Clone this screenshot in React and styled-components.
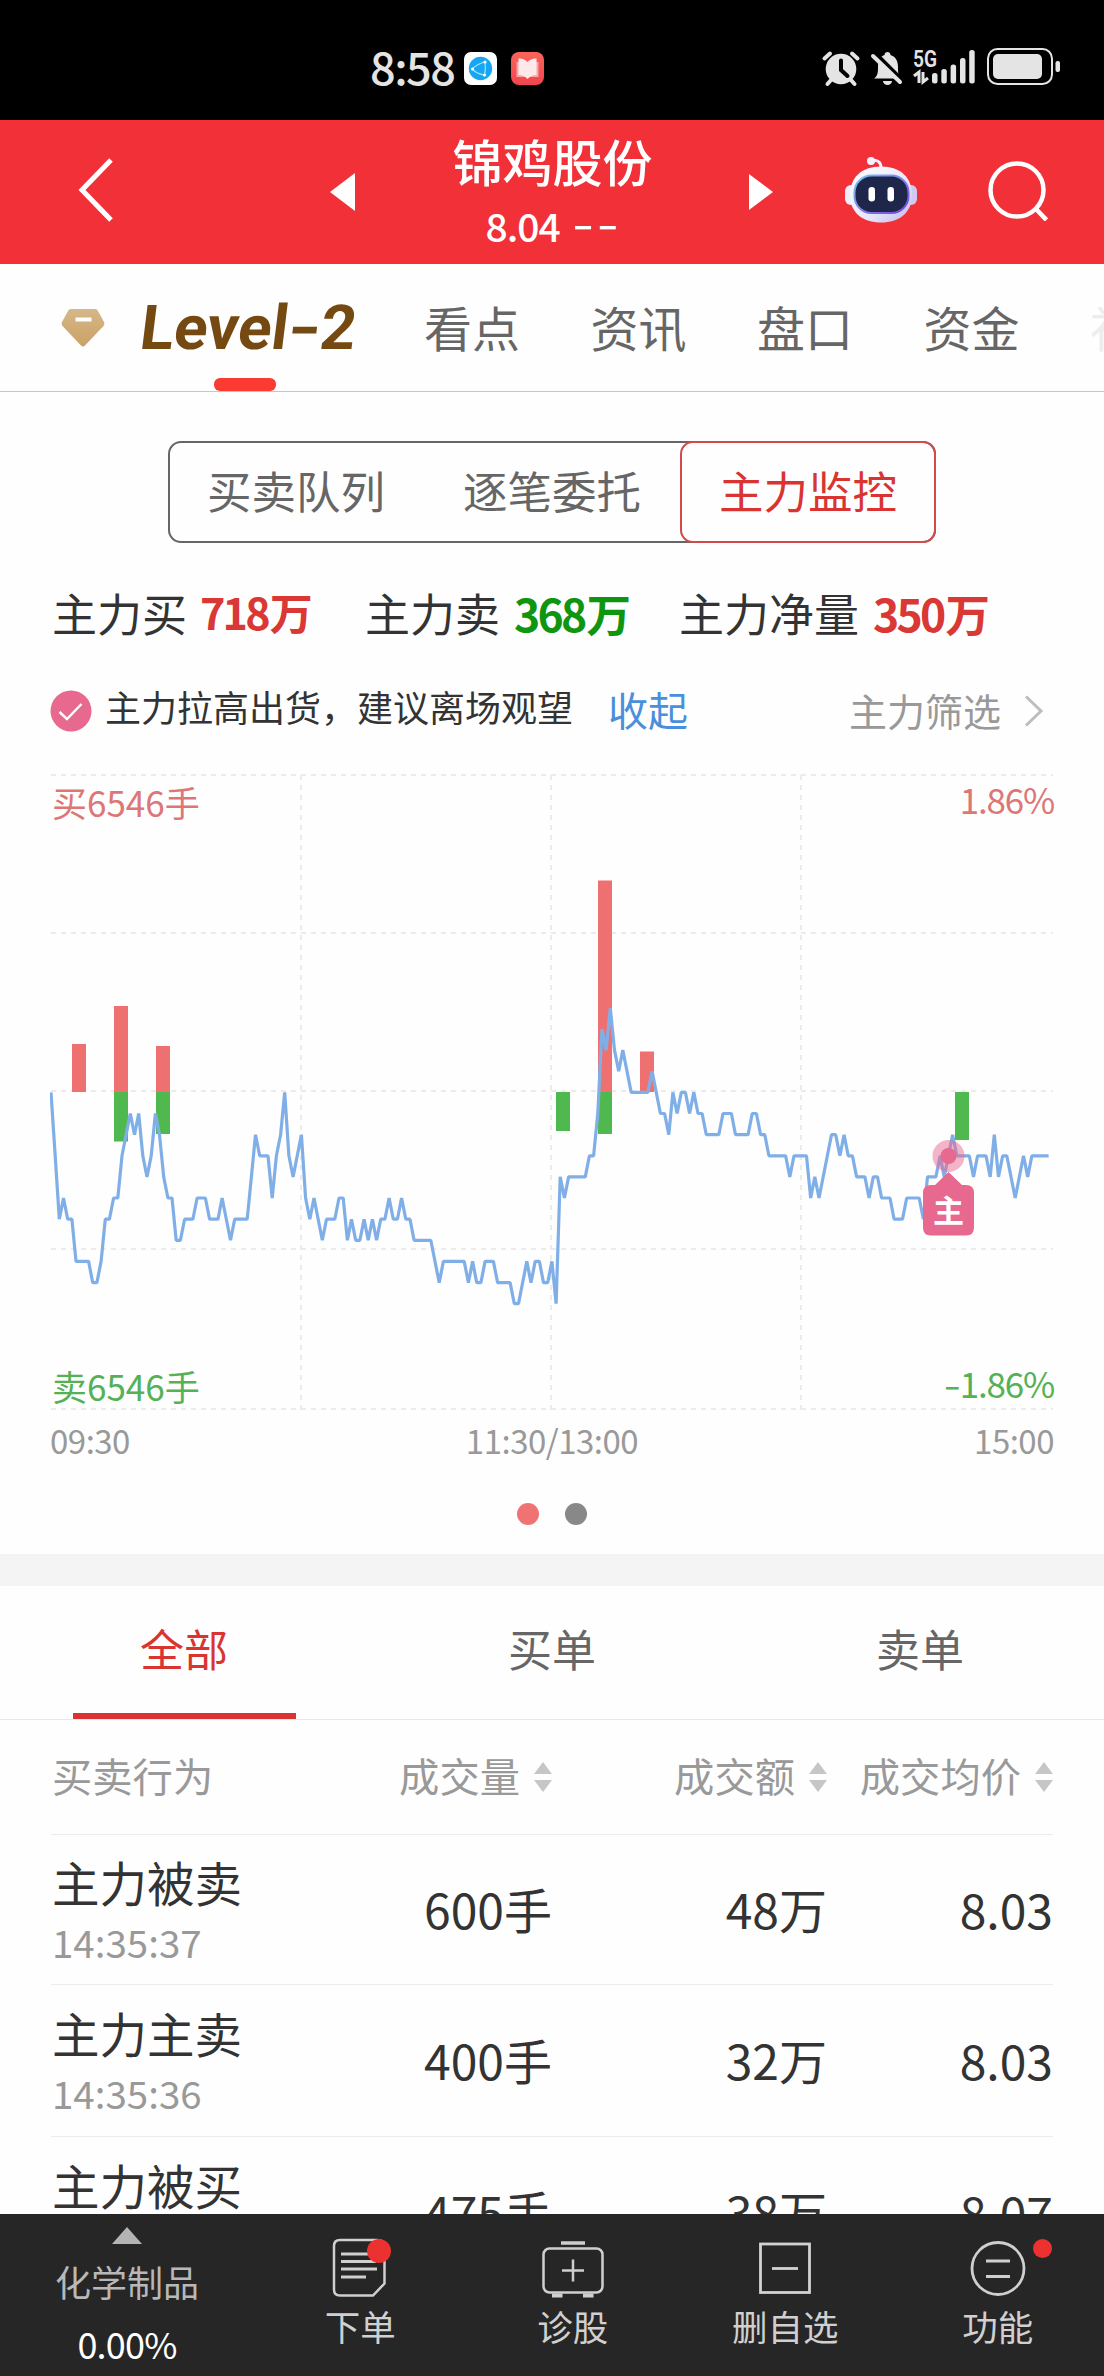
import React, { useState } from "react";
import styled, { createGlobalStyle } from "styled-components";

// minute-by-minute price steps as [minute, ticks below the opening price]
const PRICE = [
  [0, 0], [1, 3], [2, 6], [3, 5], [4, 6], [5, 6], [6, 8], [9, 8], [10, 9], [11, 9], [12, 8], [13, 6], [14, 6],
  [15, 5], [16, 5], [17, 3], [18, 2], [19, 1], [20, 2], [21, 1], [22, 3], [23, 4], [24, 3], [25, 1], [26, 2],
  [27, 4], [28, 5], [29, 5], [30, 7], [31, 7], [32, 6], [34, 6], [35, 5], [37, 5], [38, 6], [40, 6], [41, 5],
  [43, 7], [44, 6], [47, 6], [48, 4], [49, 2], [50, 3], [52, 3], [53, 5], [54, 3], [55, 2], [56, 0], [57, 3],
  [58, 4], [60, 2], [61, 5], [62, 6], [63, 5], [65, 7], [66, 6], [68, 6], [69, 5], [70, 5], [71, 7], [72, 6],
  [73, 7], [74, 7], [75, 6], [76, 7], [77, 6], [78, 7], [79, 6], [80, 6], [81, 5], [82, 6], [83, 6], [84, 5],
  [85, 6], [86, 6], [87, 7], [91, 7], [93, 9], [94, 8], [99, 8], [100, 9], [101, 8], [102, 9], [103, 9],
  [104, 8], [106, 8], [107, 9], [110, 9], [111, 10], [112, 10], [114, 8], [115, 9], [116, 8], [117, 8],
  [118, 9], [119, 9], [120, 8], [121, 10], [122, 4], [123, 5], [124, 4], [128, 4], [129, 3], [130, 3], [131, 1],
  [132, -3], [133, -2], [134, -4], [135, -2], [136, -1], [137, -2], [139, 0], [143, 0], [144, -1], [146, 1],
  [147, 1], [148, 2], [149, 0], [150, 1], [151, 0], [152, 0], [153, 1], [154, 0], [155, 1], [156, 1], [157, 2],
  [160, 2], [161, 1], [163, 1], [164, 2], [167, 2], [168, 1], [169, 1], [170, 2], [171, 2], [172, 3], [176, 3],
  [177, 4], [178, 3], [181, 3], [182, 5], [183, 4], [184, 5], [187, 2], [188, 2], [189, 3], [190, 2], [191, 3],
  [192, 3], [193, 4], [195, 4], [196, 5], [197, 4], [198, 4], [199, 5], [201, 5], [202, 6], [204, 6], [205, 5],
  [208, 5], [209, 6], [210, 4], [212, 4], [213, 3], [214, 4], [215, 3], [216, 2], [217, 3], [220, 3], [221, 4],
  [222, 3], [224, 3], [225, 4], [226, 2], [227, 4], [228, 3], [229, 3], [231, 5], [233, 3], [234, 4], [235, 3],
  [239, 3],
];

// x, buy height, sell height
const BARS = [
  [22, 48, 0],
  [64, 86, 49.5],
  [106, 46, 42],
  [506, 0, 39],
  [548, 211.5, 42],
  [590, 40.5, 0],
  [905, 0, 48],
];

const ZERO = 317;

const NAV_TABS = ["看点", "资讯", "盘口", "资金"];
const MODES = ["买卖队列", "逐笔委托", "主力监控"];
const FILTERS = ["全部", "买单", "卖单"];
const COLUMNS = ["成交量", "成交额", "成交均价"];

const TRADES = [
  { action: "主力被卖", time: "14:35:37", volume: "600手", amount: "48万", price: "8.03" },
  { action: "主力主卖", time: "14:35:36", volume: "400手", amount: "32万", price: "8.03" },
  { action: "主力被买", time: "", volume: "475手", amount: "38万", price: "8.07" },
];

const StatusIcons = () => (
  <svg width="240" height="40" viewBox="0 0 240 40" fill="#e4e4e4">
    <g transform="translate(3 3)">
      <circle cx="18" cy="18" r="15.3" />
      <path d="M1.5 7.5 L7 2.5 M34.5 7.5 L29 2.5 M8 29 L4.5 33 M28 29 L31.5 33" stroke="#e4e4e4" strokeWidth="4" strokeLinecap="round" />
      <path d="M18 9.500 V19 L24.500 25" fill="none" stroke="#000" strokeWidth="4" strokeLinecap="round" />
    </g>
    <g transform="translate(51 2)">
      <path d="M3 28.500 C7 26 7 22 7 16 C7 9.500 10 6 13.500 5 C13.500 1 19.500 1 19.500 5 C24 6.500 27 10 27 17 C27 22 27 26 30 28.500 Z" />
      <path d="M12 31 H21 A4.500 4 0 0 1 12 31 Z" />
      <path d="M4 3 L33 32" stroke="#000" strokeWidth="4" />
      <path d="M2 6 L29 32" stroke="#e4e4e4" strokeWidth="4" strokeLinecap="round" />
    </g>
    <text x="93" y="19" fontFamily="Roboto, sans-serif" fontSize="23" fontWeight="600" textLength="24" lengthAdjust="spacingAndGlyphs">5G</text>
    <path d="M94 28 L99 24 V35 M103 24 V34 L108 30" fill="none" stroke="#e4e4e4" strokeWidth="3" />
    <rect x="112" y="25" width="5.500" height="10.500" rx="2.500" />
    <rect x="121.300" y="21" width="5.500" height="14.500" rx="2.500" />
    <rect x="130.600" y="16.500" width="5.500" height="19" rx="2.500" />
    <rect x="140" y="10" width="5.500" height="25.500" rx="2.500" />
    <rect x="149.200" y="2" width="5.500" height="33.500" rx="2.500" />
    <rect x="168" y="1" width="64" height="35" rx="9.500" fill="none" stroke="#e4e4e4" strokeWidth="2" />
    <rect x="173" y="6" width="49" height="25" rx="5" />
    <rect x="235.500" y="13" width="4.500" height="11" rx="2" />
  </svg>
);

const BrowserIcon = () => (
  <svg width="33" height="33" viewBox="0 0 33 33">
    <rect width="33" height="33" rx="7" fill="#fff" />
    <circle cx="16.500" cy="16.500" r="11.700" fill="#17a6f2" />
    <path d="M8 17 Q14 11.500 21 10 M8 17 Q13 22 20.500 23 M21 10 Q22 17 20.500 23" fill="none" stroke="#a5e0fb" strokeWidth="1.200" />
    <circle cx="8.500" cy="17" r="1.600" fill="#fff" />
    <circle cx="21" cy="10" r="1.600" fill="#fff" />
    <circle cx="20.500" cy="23" r="1.600" fill="#fff" />
  </svg>
);

const BookIcon = () => (
  <svg width="33" height="33" viewBox="0 0 33 33">
    <defs>
      <linearGradient id="book" x1="0" y1="0" x2="0" y2="1">
        <stop offset="0" stopColor="#f9655a" />
        <stop offset="1" stopColor="#f2444f" />
      </linearGradient>
    </defs>
    <rect width="33" height="33" rx="8" fill="url(#book)" />
    <path d="M5.500 10 H27.500 V25 H5.500 Z" fill="#fba5a5" />
    <path d="M7.500 6.500 Q13 6 16.500 10 Q20 6 25.500 6.500 V23 Q20 23 16.500 27 Q13 23 7.500 23 Z" fill="#fde9e9" />
  </svg>
);

const Robot = () => (
  <svg width="74" height="68" viewBox="0 0 74 68">
    <defs>
      <linearGradient id="shell" x1="0" y1="0" x2="1" y2="1">
        <stop offset="0" stopColor="#fff" />
        <stop offset=".6" stopColor="#e9e6fa" />
        <stop offset="1" stopColor="#bcb8ec" />
      </linearGradient>
      <linearGradient id="rim" x1="0" y1="0" x2="1" y2="1">
        <stop offset="0" stopColor="#7cc4f0" />
        <stop offset="1" stopColor="#7a3fe0" />
      </linearGradient>
    </defs>
    <path d="M27 4.500 Q37 3 37 12" fill="none" stroke="#f3eefc" strokeWidth="3" />
    <circle cx="27" cy="5" r="4" fill="#f6f2fd" />
    <rect x="1" y="29" width="12" height="20" rx="6" fill="#efedfb" />
    <rect x="61" y="29" width="12" height="20" rx="6" fill="#cfcaf2" />
    <path d="M37 10.500 C57 10.500 68 22 68 39 C68 57 55 66.500 37 66.500 C19 66.500 6 57 6 39 C6 22 17 10.500 37 10.500 Z" fill="url(#shell)" />
    <rect x="10.500" y="19.500" width="54" height="37.500" rx="17" fill="#1e2749" stroke="url(#rim)" strokeWidth="2" />
    <rect x="24.500" y="31" width="6.500" height="14.500" rx="3.200" fill="#fff" />
    <rect x="43.500" y="31" width="6.500" height="14.500" rx="3.200" fill="#fff" />
  </svg>
);

const Diamond = () => (
  <svg width="44" height="38" viewBox="0 0 44 38">
    <defs>
      <linearGradient id="gold" x1="0" y1="0" x2="0" y2="1">
        <stop offset="0" stopColor="#d6b78a" />
        <stop offset="1" stopColor="#caa264" />
      </linearGradient>
    </defs>
    <path d="M9.500 0 H34 Q36 0 37 2 L43 13 Q44 15 42.500 17 L24 36.500 Q22 38.500 20 36.500 L1.500 17 Q0 15 1 13 L7 2 Q8 0 9.500 0 Z" fill="url(#gold)" />
    <rect x="14.500" y="8.500" width="16" height="4" fill="#fff" />
  </svg>
);

const Chart = () => {
  const line = PRICE.map(([m, t]) => `${(m * 4.174 + 1).toFixed(1)},${(ZERO + 1.4 + t * 21.13).toFixed(1)}`).join(" ");

  return (
    <svg width="1004" height="638" viewBox="0 0 1004 638">
      <g stroke="#ebebeb" strokeWidth="2" strokeDasharray="5 5">
        {[1, 159, 317, 475, 635].map((y) => (
          <path key={y} d={`M1 ${y} H1003`} />
        ))}
        {[251, 501, 751].map((x) => (
          <path key={x} d={`M${x} 1 V636`} />
        ))}
      </g>
      {BARS.map(([x, buy, sell]) => (
        <g key={x}>
          <rect x={x} y={ZERO + 1 - buy} width="14" height={buy} fill="#ef7070" />
          <rect x={x} y={ZERO + 1} width="14" height={sell} fill="#4fb84f" />
        </g>
      ))}
      <polyline points={line} fill="none" stroke="#80afe8" strokeWidth="3.200" strokeLinejoin="bevel" />
      <circle cx="898.500" cy="382" r="16" fill="#e7698f" opacity=".5" />
      <circle cx="898.500" cy="382" r="8" fill="#e7698f" />
      <path d="M898.500 398 L912 411 H916 Q924 411 924 419 V453.500 Q924 461.500 916 461.500 H881 Q873 461.500 873 453.500 V419 Q873 411 881 411 H885 Z" fill="#e7698f" />
      <text x="898.500" y="448" textAnchor="middle" fontSize="31" fontWeight="700" fill="#fff">主</text>
    </svg>
  );
};

const SortIcon = () => (
  <svg width="18" height="30" viewBox="0 0 18 30" fill="#c6c6c6">
    <path d="M9 0 L18 12 H0 Z M0 18 H18 L9 30 Z" />
  </svg>
);

const OrderIcon = () => (
  <svg width="56" height="60" viewBox="0 0 56 60" fill="none" stroke="#cfcfcf" strokeWidth="2.500">
    <path d="M8 3 H45 Q52.500 3 52.500 10 V46.500 L41 58.500 H8 Q2 58.500 2 52.500 V9 Q2 3 8 3 Z" />
    <path d="M9 17 H36 M9 24.500 H44 M9 32 H45 M9 40 H34" strokeWidth="3" />
  </svg>
);

const DiagnoseIcon = () => (
  <svg width="62" height="61" viewBox="0 0 62 61" fill="none" stroke="#cfcfcf" strokeWidth="2.500">
    <path d="M19 6 H43" strokeWidth="3.500" />
    <rect x="1.500" y="11.500" width="59" height="44" rx="6" />
    <path d="M20 33.500 H42 M31 22.500 V44.500" />
    <path d="M10 58.500 H20.500 M41 58.500 H51.500" strokeWidth="4" />
  </svg>
);

const RemoveIcon = () => (
  <svg width="52" height="60" viewBox="0 0 52 60" fill="none" stroke="#d2d2d2" strokeWidth="2.800">
    <rect x="1.500" y="7" width="49" height="48.500" />
    <path d="M13 31.500 H39" />
  </svg>
);

const MoreIcon = () => (
  <svg width="56" height="60" viewBox="0 0 56 60" fill="none" stroke="#cfcfcf" strokeWidth="2.800">
    <circle cx="28" cy="31.500" r="26" />
    <path d="M16 24 H40 M16 39.500 H40" strokeWidth="3.200" />
  </svg>
);

const TOOLS = [
  { label: "下单", icon: <OrderIcon />, dot: 24 },
  { label: "诊股", icon: <DiagnoseIcon /> },
  { label: "删自选", icon: <RemoveIcon /> },
  { label: "功能", icon: <MoreIcon />, dot: 19 },
];

const App = () => {
  const [mode, setMode] = useState(2);
  const [filter, setFilter] = useState(0);

  return (
    <Screen>
      <GlobalStyle />
      <StatusBar>
        <Clock>8:58</Clock>
        <BrowserIcon />
        <BookIcon />
        <StatusRight>
          <StatusIcons />
        </StatusRight>
      </StatusBar>

      <Header>
        <HeaderIcon>
          <svg width="36" height="64" viewBox="0 0 36 64">
            <path d="M33 2 L4 32 L33 62" fill="none" stroke="#fff" strokeWidth="5" />
          </svg>
        </HeaderIcon>
        <StockSwitch>
          <svg width="26" height="38" viewBox="0 0 26 38">
            <path d="M25 0 V38 L0 19 Z" fill="#fff" />
          </svg>
          <Stock>
            <StockName>锦鸡股份</StockName>
            <StockPrice>
              8.04 <Dashes>--</Dashes>
            </StockPrice>
          </Stock>
          <svg width="24" height="36" viewBox="0 0 24 36">
            <path d="M0 0 V36 L24 18 Z" fill="#fff" />
          </svg>
        </StockSwitch>
        <HeaderIcon>
          <Robot />
        </HeaderIcon>
        <SearchButton>
          <svg width="60" height="60" viewBox="0 0 60 60" fill="none" stroke="#fff" strokeWidth="4.500">
            <circle cx="29" cy="29" r="26.500" />
            <path d="M48 48 L58.500 59" />
          </svg>
        </SearchButton>
      </Header>

      <NavTabs>
        <Diamond />
        <LevelTab>
          <LevelText>
            Level<Hyphen $gap={4}>-</Hyphen>2
          </LevelText>
        </LevelTab>
        {NAV_TABS.map((tab) => (
          <NavTab key={tab}>{tab}</NavTab>
        ))}
        <NavTab $faded>社区</NavTab>
      </NavTabs>

      <Modes>
        {MODES.map((label, i) => (
          <Mode key={label} $active={i === mode} onClick={() => setMode(i)}>
            {label}
          </Mode>
        ))}
      </Modes>

      <Totals>
        <Total $width={313}>
          主力买 <Amount $up $raised>718<i>万</i></Amount>
        </Total>
        <Total $width={314}>
          主力卖 <Amount>368<i>万</i></Amount>
        </Total>
        <Total>
          主力净量 <Amount $up>350<i>万</i></Amount>
        </Total>
      </Totals>

      <Advice>
        <svg width="42" height="42" viewBox="0 0 42 42">
          <circle cx="21" cy="21" r="20.500" fill="#e7698f" />
          <path d="M9.500 22 L17 29 L31.500 14" fill="none" stroke="#fff" strokeWidth="2.400" />
        </svg>
        <AdviceText>主力拉高出货，建议离场观望</AdviceText>
        <Collapse>收起</Collapse>
        <Screening>主力筛选</Screening>
        <svg width="20" height="32" viewBox="0 0 20 32">
          <path d="M2 1.500 L17 16 L2 30.500" fill="none" stroke="#bdbdbd" strokeWidth="3" />
        </svg>
      </Advice>

      <ChartArea>
        <Chart />
        <ScaleRow $top={10} $color="#dd7776">
          <span>买6546手</span>
          <Percent>1.86%</Percent>
        </ScaleRow>
        <ScaleRow $top={594} $color="#55b155">
          <span>卖6546手</span>
          <Percent>
            <Hyphen $gap={3}>-</Hyphen>1.86%
          </Percent>
        </ScaleRow>
      </ChartArea>
      <TimeAxis>
        <span>09:30</span>
        <span>11:30/13:00</span>
        <span>15:00</span>
      </TimeAxis>
      <Pager>
        <PagerDot $active />
        <PagerDot />
      </Pager>

      <Filters>
        {FILTERS.map((label, i) => (
          <Filter key={label} $active={i === filter} onClick={() => setFilter(i)}>
            {label}
          </Filter>
        ))}
      </Filters>

      <Table>
        <HeadRow>
          <span>买卖行为</span>
          {COLUMNS.map((label) => (
            <HeadCell key={label}>
              {label}
              <SortIcon />
            </HeadCell>
          ))}
        </HeadRow>
        {TRADES.map((t) => (
          <Row key={t.action}>
            <div>
              <Action>{t.action}</Action>
              <Time>{t.time}</Time>
            </div>
            <Value>{t.volume}</Value>
            <Value>{t.amount}</Value>
            <Value>{t.price}</Value>
          </Row>
        ))}
      </Table>

      <Toolbar>
        <Sector>
          <svg width="30" height="17" viewBox="0 0 30 17">
            <path d="M15 0 L30 17 H0 Z" fill="#b4b4b4" />
          </svg>
          <SectorName>化学制品</SectorName>
          <SectorChange>0.00%</SectorChange>
        </Sector>
        {TOOLS.map(({ label, icon, dot }) => (
          <Tool key={label}>
            <ToolIcon>
              {icon}
              {dot && <Badge $size={dot} />}
            </ToolIcon>
            {label}
          </Tool>
        ))}
      </Toolbar>
    </Screen>
  );
};

const GlobalStyle = createGlobalStyle`
  body {
    margin: 0;
    background: #fefefe;
  }

  * {
    box-sizing: border-box;
  }

  svg {
    display: block;
    flex-shrink: 0;
  }
`;

const Screen = styled.div`
  display: flex;
  flex-direction: column;
  width: 1104px;
  height: 2376px;
  overflow: hidden;
  background: #fefefe;
  color: #333;
  font-family: "Noto Sans CJK SC", sans-serif;
  white-space: nowrap;
`;

const StatusBar = styled.div`
  display: flex;
  align-items: flex-start;
  gap: 14px;
  height: 120px;
  padding: 52px 44px 0 370px;
  background: #000;
  flex-shrink: 0;
`;

const Clock = styled.div`
  width: 80px;
  color: #e4e4e4;
  font-size: 45px;
  font-weight: 500;
  line-height: 34px;
  letter-spacing: -1.5px;
  margin-top: -3px;
`;

const StatusRight = styled.div`
  margin: -4px 0 0 auto;
`;

const Header = styled.header`
  display: flex;
  align-items: center;
  height: 144px;
  padding: 0 56px 0 78px;
  background: #f23038;
  flex-shrink: 0;
`;

const HeaderIcon = styled.div`
  padding-bottom: 5px;
`;

const SearchButton = styled.div`
  margin-left: auto;
  padding-bottom: 2px;
`;

const StockSwitch = styled.div`
  display: flex;
  align-items: center;
  justify-content: space-between;
  width: 443px;
  margin: 0 71px 0 216px;
`;

const Stock = styled.div`
  display: flex;
  flex-direction: column;
  align-items: center;
  color: #fff;
  font-weight: 500;
  padding-bottom: 4px;
`;

const StockName = styled.div`
  font-size: 50px;
  line-height: 70px;
`;

const StockPrice = styled.div`
  font-size: 39px;
  line-height: 60px;
  letter-spacing: -1px;
`;

const Dashes = styled.span`
  display: inline-block;
  margin: 0 7px 0 13px;
  letter-spacing: 2px;
  transform: translateY(-3px) scaleX(1.55);
`;

const NavTabs = styled.nav`
  display: flex;
  align-items: center;
  height: 128px;
  padding-left: 61px;
  border-bottom: 1px solid #c6c6c6;
  flex-shrink: 0;
`;

const LevelTab = styled.div`
  position: relative;
  width: 212px;
  height: 127px;
  margin: 0 71px 0 36px;
  flex-shrink: 0;

  &::after {
    content: "";
    position: absolute;
    left: 73px;
    bottom: 0;
    width: 62px;
    height: 13px;
    border-radius: 6px;
    background: #fb3a32;
  }
`;

const LevelText = styled.div`
  color: #754a12;
  font-family: Roboto, sans-serif;
  font-size: 62px;
  font-weight: 700;
  line-height: 127px;
  transform: skewX(-7deg);
`;

const Hyphen = styled.span`
  display: inline-block;
  transform: scaleX(1.4);
  margin: 0 ${(p) => p.$gap}px;
`;

const NavTab = styled.div`
  color: ${(p) => (p.$faded ? "#ededed" : "#666")};
  font-size: 48px;
  margin-right: 70.5px;
  padding-bottom: 4px;
  flex-shrink: 0;
`;

const Modes = styled.div`
  display: flex;
  width: 768px;
  height: 102px;
  margin: 49px auto 0;
  border-radius: 13px;
  box-shadow: inset 0 0 0 2px #666;
  flex-shrink: 0;
`;

const Mode = styled.div`
  flex: 1;
  text-align: center;
  font-size: 44.5px;
  line-height: 98px;
  border-radius: 13px;
  color: ${(p) => (p.$active ? "#d93431" : "#666")};
  box-shadow: ${(p) => (p.$active ? "inset 0 0 0 2px #d24a4a" : "none")};
`;

const Totals = styled.div`
  display: flex;
  margin: 37px 52px 0;
  height: 66px;
  flex-shrink: 0;
`;

const Total = styled.div`
  display: flex;
  gap: 14px;
  width: ${(p) => (p.$width ? `${p.$width}px` : "auto")};
  font-size: 45px;
  line-height: 66px;
`;

const Amount = styled.b`
  color: ${(p) => (p.$up ? "#d93835" : "#109510")};
  font-size: ${(p) => (p.$raised ? "43px" : "44.5px")};
  letter-spacing: -2.8px;
  margin-top: ${(p) => (p.$raised ? "-2px" : "0")};
  margin-left: ${(p) => (p.$raised ? "-1px" : "0")};

  i {
    font-style: normal;
    margin-left: 2px;
  }
`;

const Advice = styled.div`
  display: flex;
  align-items: center;
  height: 60px;
  margin: 35px 60px 0 50px;
  flex-shrink: 0;
`;

const AdviceText = styled.div`
  margin-left: 13px;
  font-size: 36px;
  padding-bottom: 10px;
`;

const Collapse = styled.div`
  margin-left: 35px;
  color: #4a8fdc;
  font-size: 40px;
  padding-bottom: 4px;
`;

const Screening = styled.div`
  margin: 0 23px 0 auto;
  color: #999;
  font-size: 38px;
  padding-bottom: 4px;
`;

const ChartArea = styled.div`
  position: relative;
  height: 638px;
  margin: 33px 50px 0;
  flex-shrink: 0;
`;

const ScaleRow = styled.div`
  position: absolute;
  left: 2px;
  right: 0;
  top: ${(p) => p.$top}px;
  display: flex;
  justify-content: space-between;
  color: ${(p) => p.$color};
  font-size: 35px;
  line-height: 36px;
`;

const Percent = styled.span`
  letter-spacing: -1.2px;
  margin-top: -3px;
`;

const TimeAxis = styled.div`
  display: flex;
  justify-content: space-between;
  margin: 8px 50px 0;
  color: #999;
  font-size: 33px;
  line-height: 40px;
  letter-spacing: -0.5px;
  flex-shrink: 0;
`;

const Pager = styled.div`
  display: flex;
  justify-content: center;
  gap: 26px;
  padding: 43px 0 29px;
  flex-shrink: 0;
`;

const PagerDot = styled.div`
  width: 22px;
  height: 22px;
  border-radius: 50%;
  background: ${(p) => (p.$active ? "#f07373" : "#888")};
`;

const Filters = styled.div`
  display: flex;
  height: 166px;
  border-top: 32px solid #f4f4f4;
  border-bottom: 1px solid #e9e9e9;
  flex-shrink: 0;
`;

const Filter = styled.div`
  position: relative;
  flex: 1;
  text-align: center;
  font-size: 44px;
  line-height: 124px;
  color: ${(p) => (p.$active ? "#d93431" : "#666")};

  &::after {
    content: "";
    display: ${(p) => (p.$active ? "block" : "none")};
    position: absolute;
    left: 73px;
    right: 72px;
    bottom: 0;
    height: 6px;
    background: #d93431;
  }
`;

const Table = styled.div`
  flex: 1;
  min-height: 0;
  overflow: hidden;
  padding: 0 51px;
`;

const HeadRow = styled.div`
  display: grid;
  grid-template-columns: 225px 275px 275px 226px;
  align-items: center;
  height: 115px;
  padding: 0 0 5px 1px;
  border-bottom: 1px solid #ececec;
  color: #999;
  font-size: 40.3px;
`;

const HeadCell = styled.div`
  display: flex;
  align-items: center;
  justify-content: flex-end;
  gap: 14px;

  svg {
    margin-top: 4px;
  }
`;

const Row = styled.div`
  display: grid;
  grid-template-columns: 225px 275px 275px 226px;
  align-items: center;
  height: 152px;
  border-bottom: 1px solid #ececec;
  padding-left: 1px;

  &:nth-child(2) {
    height: 150px;
  }
`;

const Action = styled.div`
  font-size: 47.5px;
  line-height: 62px;
`;

const Time = styled.div`
  min-height: 56px;
  color: #999;
  font-size: 38.5px;
  line-height: 56px;
`;

const Value = styled.div`
  text-align: right;
  font-size: 48px;
  line-height: 60px;
  padding-bottom: 4px;
`;

const Toolbar = styled.footer`
  display: flex;
  height: 162px;
  background: #262626;
  flex-shrink: 0;
`;

const Sector = styled.div`
  display: flex;
  flex-direction: column;
  align-items: center;
  width: 254px;
  padding-top: 13px;
  color: #b8b8b8;
`;

const SectorName = styled.div`
  font-size: 36px;
  line-height: 50px;
  margin-top: 12px;
`;

const SectorChange = styled.div`
  color: #fff;
  font-size: 36px;
  line-height: 50px;
  letter-spacing: -0.8px;
  margin-top: 12px;
`;

const Tool = styled.div`
  display: flex;
  flex-direction: column;
  align-items: center;
  width: 212.5px;
  padding-top: 23px;
  color: #d0d0d0;
  font-size: 35.5px;
  line-height: 50px;
`;

const ToolIcon = styled.div`
  position: relative;
  height: 64px;
`;

const Badge = styled.div`
  position: absolute;
  top: 2px;
  right: ${(p) => (p.$size === 24 ? "-3px" : "-26px")};
  width: ${(p) => p.$size}px;
  height: ${(p) => p.$size}px;
  border-radius: 50%;
  background: #ec3230;
`;

export default App;
